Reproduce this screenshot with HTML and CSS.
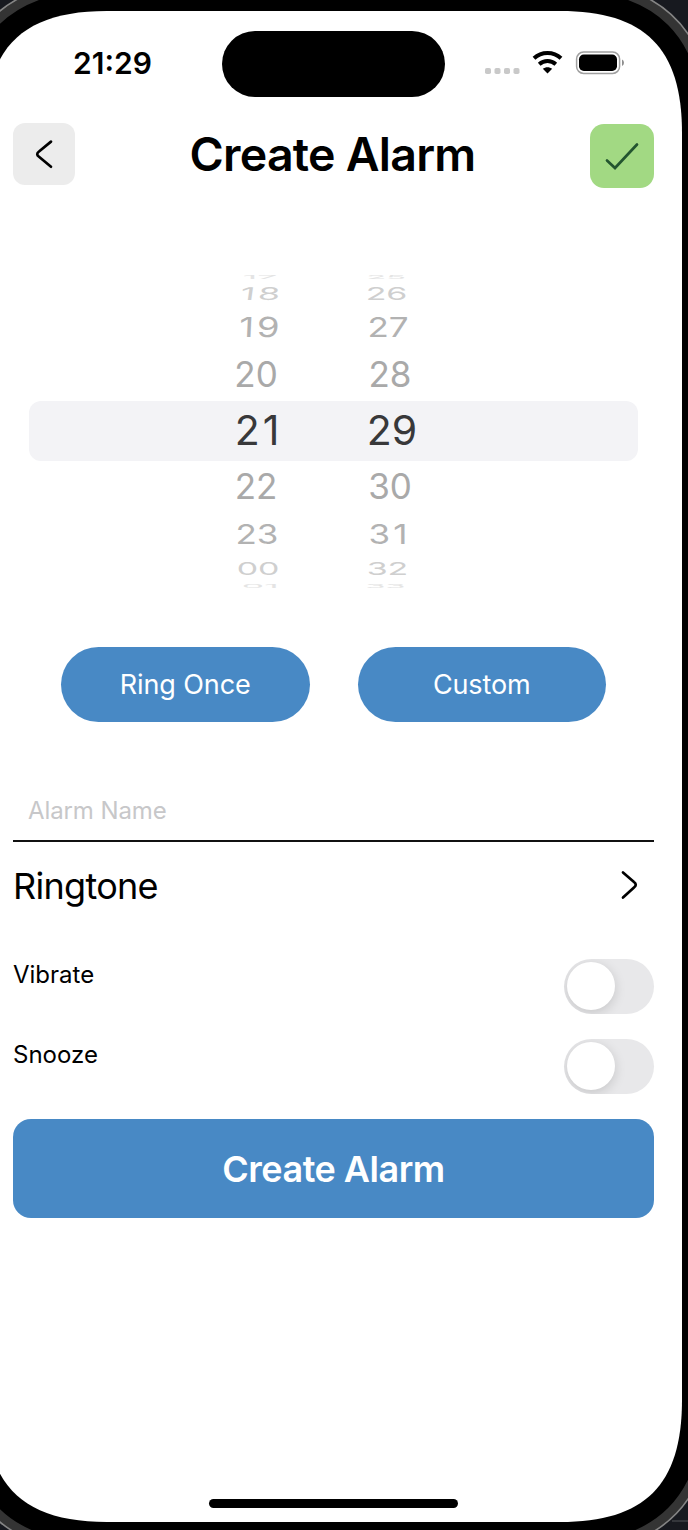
FILE: index.html
```html
<!DOCTYPE html>
<html lang="en">
<head>
<meta charset="utf-8">
<title>Create Alarm</title>
<link rel="stylesheet" href="styles.css">
</head>
<body>
<svg class="device" viewBox="0 0 688 1530" aria-hidden="true">
  <defs>
    <path id="screen" d="M107 11H560C645 11 682 48 682 133V1400C682 1485 645 1522 560 1522H107C22 1522 -15 1485 -15 1400V133C-15 48 22 11 107 11Z"/>
  </defs>
  <rect width="688" height="1530" fill="#17191f"/>
  <path d="M672 1521H688" stroke="#34363b" stroke-width="2"/>
  <use href="#screen" stroke="#858585" stroke-width="64"/>
  <use href="#screen" stroke="#343434" stroke-width="61"/>
  <use href="#screen" stroke="#000" stroke-width="43"/>
  <use href="#screen" fill="#fff"/>
</svg>
<main class="app">
  <div class="status">
    <span class="clock">21:29</span>
    <span class="island"></span>
    <svg class="signals" viewBox="0 0 142 30" aria-hidden="true">
      <g fill="#c9c9c9"><rect x="1" y="20" width="6" height="6" rx="1.800"/><rect x="10.500" y="20" width="6" height="6" rx="1.800"/><rect x="20" y="20" width="6" height="6" rx="1.800"/><rect x="29.500" y="20" width="6" height="6" rx="1.800"/></g>
      <g fill="none" stroke="#000" stroke-width="4">
        <path d="M50 10.300C57.500 3.200 69.500 3.200 77 10.300"/>
        <path d="M55.200 16.200C60 12 67 12 71.800 16.200"/>
      </g>
      <path d="M58.800 20.800C61.500 18.600 65.500 18.600 68.200 20.800L63.500 25.500Z"/>
      <rect x="92.600" y="4.100" width="43" height="21.300" rx="7" fill="none" stroke="#a0a0a0" stroke-width="1.500"/>
      <rect x="95" y="6.500" width="38" height="16.500" rx="4.800"/>
      <path d="M138 11.500Q140 12.500 140 14.700T138 18Z" fill="#8e8e8e"/>
    </svg>
  </div>
  <header class="header">
    <button class="back" aria-label="Back"><svg width="62" height="62" viewBox="0 0 62 62"><path d="M38 18.600L26 28.500Q22.500 31.100 26 33.800L38 43.700"/></svg></button>
    <h1>Create Alarm</h1>
    <button class="confirm" aria-label="Save"><svg width="64" height="64" viewBox="0 0 64 64"><path d="M17 36.500L25 44L47 20.500"/></svg></button>
  </header>
  <section class="picker">
    <div class="wheel hours">
      <span class="far4"><b>17</b></span><span class="far3"><b class="wide">18</b></span><span class="far2"><b class="wide">19</b></span><span class="far1"><b>20</b></span><span class="now"><b class="wide">21</b></span><span class="far1"><b>22</b></span><span class="far2"><b>23</b></span><span class="far3"><b>00</b></span><span class="far4"><b>01</b></span>
    </div>
    <div class="wheel minutes">
      <span class="far4"><b>25</b></span><span class="far3"><b>26</b></span><span class="far2"><b>27</b></span><span class="far1"><b>28</b></span><span class="now"><b>29</b></span><span class="far1"><b>30</b></span><span class="far2"><b class="wide">31</b></span><span class="far3"><b>32</b></span><span class="far4"><b>33</b></span>
    </div>
  </section>
  <div class="modes">
    <button class="pill">Ring Once</button>
    <button class="pill">Custom</button>
  </div>
  <div class="name"><span>Alarm Name</span></div>
  <div class="ringtone"><span>Ringtone</span><svg width="20" height="32" viewBox="0 0 20 32"><path d="M4 3.500L15 13Q18.500 15.700 15 18.500L4 28.500"/></svg></div>
  <div class="option"><span>Vibrate</span><i class="switch"></i></div>
  <div class="option"><span>Snooze</span><i class="switch"></i></div>
  <button class="create">Create Alarm</button>
  <div class="home"></div>
</main>
</body>
</html>
```
FILE: styles.css
```css
* { box-sizing: border-box; }
body {
  margin: 0;
  width: 688px;
  height: 1530px;
  overflow: hidden;
  position: relative;
  background: #000;
  font-family: Inter, "Liberation Sans", sans-serif;
  color: #000;
}
button {
  border: 0;
  padding: 0;
  margin: 0;
  font: inherit;
  color: inherit;
}
svg { display: block; }
.device {
  position: absolute;
  top: 0;
  left: 0;
  width: 688px;
  height: 1530px;
}
.app {
  position: relative;
  width: 641px;
  height: 1530px;
  margin-left: 13px;
  padding-top: 30px;
  display: flex;
  flex-direction: column;
  white-space: nowrap;
}
.status {
  height: 67px;
  display: grid;
  grid-template-columns: 209px 223px 209px;
  align-items: center;
}
.clock {
  padding: 0 0 2px 60px;
  font-size: 30px;
  font-weight: 600;
  line-height: 36px;
}
.island {
  height: 66px;
  border-radius: 33px;
  background: #000;
}
.signals {
  width: 142px;
  height: 30px;
  margin: 0 0 2px 39px;
}
.header {
  height: 66px;
  margin-top: 26px;
  display: flex;
  justify-content: space-between;
  align-items: flex-start;
}
.header h1 {
  margin: 3px 0 0;
  font-size: 46.500px;
  line-height: 56px;
  font-weight: 600;
  letter-spacing: -.75px;
}
.header path, .ringtone path {
  fill: none;
  stroke: #000;
  stroke-width: 2.700;
  stroke-linecap: round;
  stroke-linejoin: round;
}
.back {
  width: 62px;
  height: 62px;
  border-radius: 12px;
  background: #ececec;
}
.confirm {
  width: 64px;
  height: 64px;
  margin-top: 1px;
  border-radius: 14px;
  background: #a2d983;
}
.header .confirm path { stroke: #23552f; stroke-linejoin: miter; }
.picker {
  position: relative;
  height: 314px;
  margin: 84px 16px 0;
  padding-left: 186px;
  display: flex;
  gap: 50px;
}
.picker::before {
  content: "";
  position: absolute;
  left: 0;
  right: 0;
  top: 128px;
  height: 60px;
  border-radius: 12px;
  background: #f3f3f6;
}
.wheel {
  width: 84px;
  display: flex;
  flex-direction: column;
  align-items: center;
}
.wheel span {
  position: relative;
  flex: none;
  display: flex;
  align-items: center;
  justify-content: center;
  font-size: 35px;
}
.wheel b { font-weight: 400; line-height: 42px; }
.wheel .wide { letter-spacing: 3px; margin-right: -3px; }
.wheel .now { height: 60px; color: #38383a; }
.wheel .now b { font-size: 41px; }
.minutes .now b { transform: translateX(1px); }
.far1 { height: 52px; color: #a9a9a9; }
.far1 b { transform: translateX(-1px); }
.far2 { height: 43px; color: #b2b2b2; }
.far2 b { transform: scaleY(.79); }
.far3 { height: 25px; color: #cfcfcf; }
.far3 b { transform: translate(1px, 0) scale(.97, .5); }
.hours .far2 .wide { transform: translateX(2px) scale(1.04, .79) skewX(-2deg); }
.hours .far3 .wide { transform: translateX(3px) scale(1.02, .5) skewX(-4deg); }
.far4 { height: 7px; color: #e4e4e4; }
.far4 b { transform: translate(3px, 0) scale(1.02, .15); }
.far4:last-child b { transform: translate(3px, 2px) scale(1.02, .15); }
.minutes .far2 b { transform: translateX(-3px) scaleY(.79); }
.minutes .far3 b { transform: translate(-4px, 0) scale(.97, .5); }
.minutes .far4 b { transform: translate(-5px, 0) scale(.93, .15); }
.minutes .far4:last-child b { transform: translate(-5px, 2px) scale(.93, .15); }
.modes {
  height: 75px;
  margin-top: 60px;
  padding: 0 48px;
  display: flex;
  justify-content: space-between;
}
.pill {
  width: 248.500px;
  border-radius: 38px;
  background: #4889c5;
  color: #fff;
  font-size: 27px;
  letter-spacing: -.1px;
}
.name {
  height: 120px;
  padding: 74px 15px 0;
  border-bottom: 2px solid #111;
  font-size: 24px;
  line-height: 30px;
  letter-spacing: -.1px;
  color: #c7c7c9;
}
.ringtone {
  height: 86px;
  padding-right: 15px;
  display: flex;
  align-items: center;
  justify-content: space-between;
  font-size: 36px;
  letter-spacing: -.7px;
}
.ringtone span { padding-top: 2px; }
.option {
  height: 80px;
  padding-top: 31px;
  display: flex;
  justify-content: space-between;
  font-size: 24px;
  line-height: 32px;
}
.switch {
  width: 90px;
  height: 55px;
  border-radius: 28px;
  background: #e8e8ea;
  padding: 3px;
  overflow: hidden;
}
.switch::before {
  content: "";
  display: block;
  width: 48px;
  height: 48px;
  border-radius: 50%;
  background: #fff;
  box-shadow: 0 3px 12px rgba(0,0,0,.15);
}
.create {
  height: 99px;
  margin-top: 31px;
  border-radius: 18px;
  background: #4889c5;
  color: #fff;
  font-size: 36px;
  font-weight: 600;
  letter-spacing: -.5px;
}
.home {
  width: 249px;
  height: 9px;
  margin: auto auto 22px;
  border-radius: 5px;
  background: #000;
}
```
